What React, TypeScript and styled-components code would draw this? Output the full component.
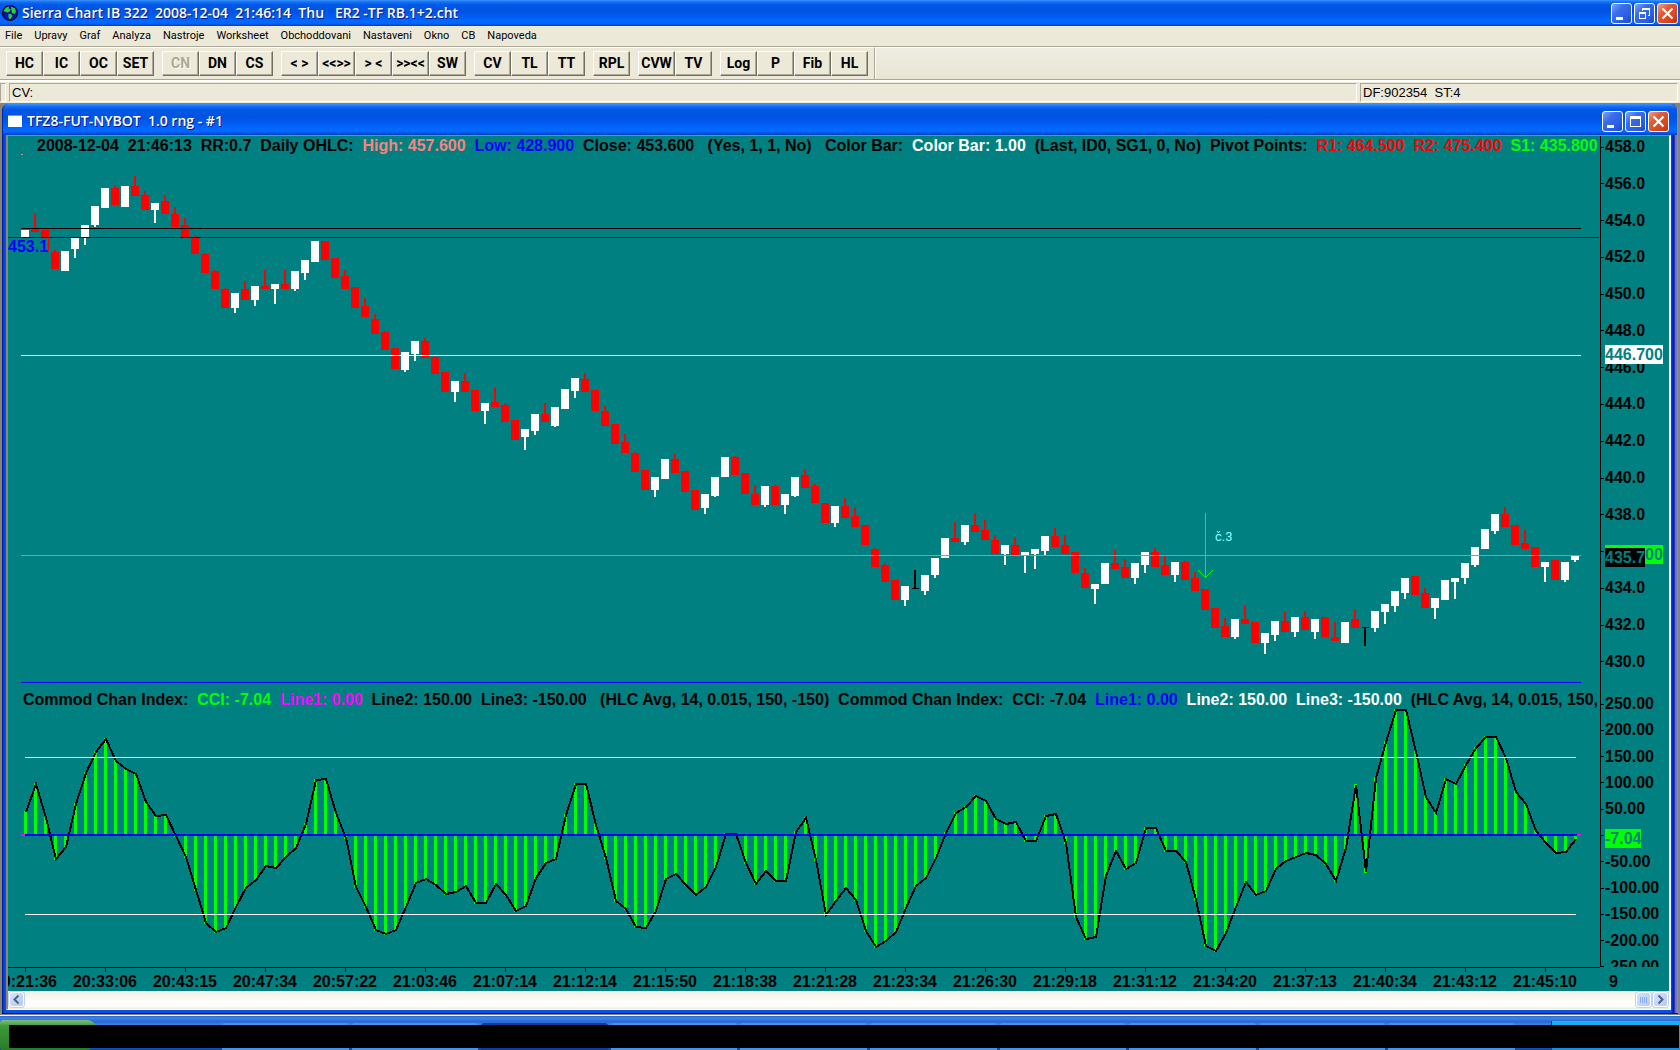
import React from "react";
import styled, { createGlobalStyle, css } from "styled-components";

const teal = "#008080";
const face = "#ece9d8";
const ui = `Roboto, "Open Sans", sans-serif`;
const chartFont = `"Liberation Sans", Arial, sans-serif`;

const Global = createGlobalStyle`
  * { box-sizing: border-box; }
  body { margin: 0; background: #808080; }
`;

const Desktop = styled.div`
  display: flex;
  flex-direction: column;
  min-height: 100vh;
  background: #868478;
  font: 11px ${ui};
  color: #000;
`;

/* ---------- title bars ---------- */

const titleGradient = css`
  background: linear-gradient(
    to bottom,
    #3a93ff 0%,
    #1270f4 8%,
    #0058e6 18%,
    #0053e1 42%,
    #005cf2 62%,
    #0268ff 80%,
    #0066fc 90%,
    #003fc0 100%
  );
`;

const TitleBar = styled.header<{ $child?: boolean }>`
  ${titleGradient}
  display: flex;
  align-items: center;
  gap: 4px;
  flex: none;
  height: ${(p) => (p.$child ? 31 : 26)}px;
  padding: ${(p) => (p.$child ? "3px 8px 0 4px" : "0 2px")};
  border-radius: ${(p) => (p.$child ? "6px 6px 0 0" : "0")};
`;

const TitleText = styled.h1`
  flex: 1;
  margin: 0;
  overflow: hidden;
  white-space: pre;
  font: 600 14px/18px "Open Sans", "Noto Sans", sans-serif;
  color: #fff;
  text-shadow: 1px 1px 0 #0a1883;
`;

const WinButtons = styled.div`
  display: flex;
  gap: 2px;
`;

const WinButton = styled.button<{ $close?: boolean }>`
  display: grid;
  place-items: center;
  width: 21px;
  height: 21px;
  padding: 0;
  border: 1px solid #fff;
  border-radius: 3px;
  background: ${(p) =>
    p.$close
      ? "linear-gradient(135deg, #f0a088 0%, #e25a35 35%, #d8441c 75%, #b8300c 100%)"
      : "linear-gradient(135deg, #7fa6f8 0%, #3a6cea 35%, #2a5ce4 75%, #1c46c0 100%)"};
`;

/* ---------- menu, toolbar, status ---------- */

const MenuBar = styled.nav`
  display: flex;
  align-items: center;
  gap: 12px;
  flex: none;
  height: 20px;
  padding: 0 5px;
  background: ${face};
`;

const MenuItem = styled.button`
  padding: 0;
  border: 0;
  background: none;
  font: 11px/16px ${ui};
  color: #000;
`;

const ToolBar = styled.div`
  display: flex;
  flex: none;
  height: 36px;
  border-top: 1px solid #aca899;
  border-bottom: 2px solid #fff;
  background: linear-gradient(#efede4, #e8e5d2);
  box-shadow: inset 0 1px 0 #fff, inset 0 -1px 0 #aca899;
`;

const ToolBand = styled.div`
  display: flex;
  align-items: center;
  gap: 8px;
  margin-bottom: 1px;
  padding: 0 6px 0 6px;
  background: ${face};
  border-top: 1px solid #fff;
  border-right: 1px solid #aca899;
  box-shadow: 1px 0 0 #fff;
`;

const ToolGroup = styled.div`
  display: flex;
`;

const ToolButton = styled.button`
  width: 37px;
  height: 25px;
  padding: 0 0 2px;
  border: 1px solid;
  border-color: #fff #716f64 #716f64 #fff;
  box-shadow: inset -1px -1px 0 #aca899;
  background: ${face};
  font: 700 14px/20px ${ui};
  white-space: nowrap;
  color: #000;
  &:disabled {
    color: #aca899;
    text-shadow: 1px 1px 0 #fff;
  }
`;

const StatusBar = styled.div`
  display: flex;
  gap: 3px;
  flex: none;
  height: 21px;
  padding: 1px 2px 1px 0;
  background: ${face};
`;

const StatusCell = styled.div<{ $width?: string }>`
  flex: ${(p) => (p.$width ? `0 0 ${p.$width}` : "1")};
  padding: 0 2px;
  border: 1px solid;
  border-color: #aca899 #fff #fff #aca899;
  font: 13px/17px ${chartFont};
  white-space: pre;
`;

/* ---------- chart window ---------- */

const ChildWindow = styled.section`
  display: flex;
  flex-direction: column;
  flex: 1;
  margin: 1px 2px 0 2px;
  padding: 0 4px 3px;
  background: linear-gradient(to right, #001ea0, #0a4fe8 3px, #0a4fe8 calc(100% - 7px), #0010a0 calc(100% - 4px), #5a62c8 calc(100% - 3px), #8a8fe0);
  border-radius: 6px 6px 0 0;
  border-bottom: 1px solid #000e90;
`;

const FullTitle = styled.div`
  margin: 0 -3px;
`;

const Client = styled.div`
  display: flex;
  flex-direction: column;
  flex: 1;
  margin-right: 3px;
  border: solid;
  border-width: 1px 2px 1px 2px;
  border-color: #8a8878 #fff #fff #8a8878;
`;

const ChartGrid = styled.main`
  display: grid;
  flex: 1;
  grid-template-columns: minmax(0, 1fr) 69px;
  grid-template-rows: minmax(548px, 548fr) minmax(283px, 283fr) 24px;
  background: ${teal};
  font: 700 16px/18px ${chartFont};
`;

const Panel = styled.div`
  position: relative;
  overflow: hidden;
`;

const Plot = styled.svg`
  position: absolute;
  inset: 0;
  width: 100%;
  height: 100%;
`;

const Legend = styled.p<{ $lead: number; $top: number }>`
  position: relative;
  margin: 0;
  padding: ${(p) => p.$top}px 0 0 ${(p) => p.$lead}px;
  white-space: pre;
`;

const Tone = styled.span<{ $color: string }>`
  color: ${(p) => p.$color};
`;

const LeftTag = styled.span`
  position: absolute;
  left: 0;
  top: 102px;
  width: 40px;
  background: ${teal};
  color: #00f;
`;

const Note = styled.span`
  position: absolute;
  left: 1207px;
  top: 393px;
  font: 13px/16px ${ui};
  color: #80ffff;
`;

const Axis = styled.div`
  position: relative;
  overflow: hidden;
  border-left: 1px solid #000;
`;

const AxisScale = styled.ol<{ $pad: string }>`
  display: flex;
  flex-direction: column;
  justify-content: space-between;
  position: absolute;
  inset: ${(p) => p.$pad};
  margin: 0;
  padding: 0;
  list-style: none;
`;

const AxisLabel = styled.li`
  display: flex;
  align-items: center;
  gap: 1px;
  height: 18px;
  &::before {
    content: "";
    width: 3px;
    height: 1px;
    background: #000;
  }
`;

const ValueTag = styled.span<{ $top: number; $bg: string }>`
  position: absolute;
  left: 4px;
  top: ${(p) => p.$top}px;
  line-height: 19px;
  background: ${(p) => p.$bg};
  color: ${teal};
`;

const TimeAxis = styled.div`
  display: flex;
  overflow: hidden;
  border-top: 1px solid #000;
`;

const TimeList = styled.ol`
  display: flex;
  margin: 0 0 0 -23px;
  padding: 0;
  list-style: none;
`;

const TimeLabel = styled.li`
  display: flex;
  flex-direction: column;
  align-items: center;
  gap: 1px;
  flex: none;
  width: 80px;
  &::before {
    content: "";
    width: 1px;
    height: 4px;
    background: #000;
  }
`;

const TimeCorner = styled.div`
  padding: 6px 0 0 9px;
`;

const ScrollBar = styled.div`
  display: flex;
  justify-content: space-between;
  flex: none;
  height: 18px;
  padding: 1px;
  background: linear-gradient(#f1efe8, #fdfdfa 60%, #fefefb 85%, #ebebd8);
`;

const ScrollEnd = styled.div`
  display: flex;
  gap: 2px;
`;

const ScrollButton = styled.button`
  display: grid;
  place-items: center;
  width: 15px;
  height: 15px;
  padding: 0;
  border: 1px solid #fff;
  border-radius: 3px;
  background: linear-gradient(135deg, #d6e2fe, #b4c8f6);
  box-shadow: 0 0 0 1px #c3d0ea;
`;

/* ---------- task bar ---------- */

const TaskBar = styled.footer`
  display: grid;
  grid-template: 34px / 97px minmax(0, 1fr) 129px;
  flex: none;
  margin-top: 1px;
  border-top: 1px solid #f4f2e6;
  background: linear-gradient(#2a62c8, #3f86ea 2px, #2f74de 4px, #2a66d8 6px, #3a80ea 8px, #245bd4 20px, #1f50c6 32px, #153a9a);
`;

const Start = styled.button`
  grid-area: 1 / 1;
  margin: 4px 0 0;
  padding: 0;
  border: 0;
  border-radius: 3px 10px 12px 3px;
  background: linear-gradient(#7fbf7c, #3f9a3c 6px, #2f8a30 20px, #2a7a2a);
`;

const Tabs = styled.div`
  grid-area: 1 / 2;
  display: flex;
  gap: 3px;
  padding: 7px 36px 0 125px;
`;

const Tab = styled.span<{ $on?: boolean }>`
  flex: 1;
  border-radius: 3px 3px 0 0;
  background: ${(p) => (p.$on ? "#123c9c" : "#4a90f0")};
`;

const Tray = styled.div`
  grid-area: 1 / 3;
  margin-top: 5px;
  border-left: 1px solid #0a3ca0;
  background: linear-gradient(#1ab0f0, #1290e4);
`;

const Mask = styled.div`
  grid-area: 1 / 1 / 2 / 4;
  margin: 9px 1px 2px 9px;
  background: #000;
`;

/* ---------- data ---------- */

type Candle = [kind: "W" | "R" | "K", high: number, top: number, base: number, low: number];

// Each entry: colour, then wick top, body top, body base, wick base in window rows.
const candleText = `W 230 230 237 237|R 213 229 232 232|R 230 230 251 251|R 250 252 269 269|W 251 251 271 271|W 238 238 249 258|W 225 225 237 245|W 206 206 225 227|W 188 188 208 208|R 185 188 205 205
W 186 186 207 207|R 176 186 196 196|R 191 195 210 210|W 203 203 210 223|R 195 201 214 214|R 207 214 227 227|R 218 225 237 237|R 235 238 254 254|R 253 254 273 273|R 270 271 289 289
R 288 289 308 308|W 293 293 308 313|R 281 289 300 300|W 286 286 300 306|R 270 286 289 289|W 284 284 289 304|R 270 284 289 289|W 271 271 289 291|W 260 260 273 280|W 241 241 262 262
R 241 241 260 260|R 258 258 278 278|R 270 276 289 289|R 287 287 308 308|R 298 306 317 317|R 314 319 334 334|R 331 332 350 350|R 348 348 369 369|W 352 352 370 372|W 341 341 354 361
R 338 341 358 358|R 356 357 374 374|R 372 372 392 392|W 381 381 392 402|R 373 381 392 392|R 390 390 411 411|W 403 403 411 424|R 388 402 407 407|R 403 405 422 422|R 420 420 440 440
W 429 429 437 450|W 414 414 431 435|R 403 414 422 422|W 407 407 426 427|W 389 389 409 409|W 378 378 391 398|R 373 379 392 392|R 390 390 411 411|R 406 411 426 426|R 424 424 444 444
R 434 442 453 453|R 452 453 472 472|R 470 470 490 490|W 477 477 490 497|W 459 459 479 479|R 454 459 473 473|R 471 471 492 492|R 490 490 510 510|W 494 494 508 514|W 477 477 496 497
W 457 457 477 477|R 456 457 475 475|R 473 473 494 494|R 485 494 505 505|W 486 486 505 507|R 485 486 505 505|W 494 494 505 514|W 477 477 496 497|R 469 475 488 488|R 484 486 503 503
R 503 503 523 523|W 506 506 523 527|R 498 506 518 518|R 507 516 527 527|R 525 525 545 545|R 548 549 567 567|R 563 565 582 582|R 580 580 600 600|W 586 586 600 606|K 570 588 589 589
W 575 575 591 595|W 558 558 575 578|W 538 538 558 558|R 522 538 542 542|W 525 525 542 545|R 513 525 532 532|R 520 530 540 540|R 535 540 554 554|W 545 545 554 565|R 537 545 556 556
W 552 552 555 573|W 549 549 554 569|W 536 536 551 555|R 528 536 547 547|R 535 545 554 554|R 552 552 573 573|R 568 573 588 588|W 584 584 589 604|W 563 563 584 584|R 550 563 569 569
R 559 567 578 578|W 563 563 578 584|W 552 552 565 573|R 548 552 567 567|R 556 565 575 575|W 562 562 575 582|R 561 562 580 580|R 572 578 591 591|R 589 589 610 610|R 608 608 628 628
R 618 626 637 637|W 619 619 637 639|R 605 619 624 624|R 622 622 643 643|W 633 633 643 654|W 621 621 635 641|R 612 621 632 632|W 617 617 632 637|R 611 617 630 630|W 619 619 632 639
R 617 617 637 637|R 622 637 641 641|W 622 622 643 643|R 609 619 628 628|K 627 627 628 646|W 611 611 628 632|W 604 604 612 624|W 591 591 606 612|W 578 578 593 599|R 576 576 595 595
R 588 593 608 608|W 598 598 608 619|W 580 580 600 600|W 578 578 582 599|W 563 563 578 584|W 547 547 565 567|W 529 529 549 549|W 514 514 531 534|R 507 514 527 527|R 525 525 545 545
R 530 543 549 549|R 547 547 567 567|W 562 562 567 582|R 560 560 580 580|W 562 562 580 582|W 556 556 560 562`;

const candles: Candle[] = candleText.split(/[|\n]/).map((entry) => {
  const [kind, ...rows] = entry.trim().split(" ");
  return [kind, ...rows.map((r) => Number(r) - 136)] as Candle;
});

// Index readings, three units to a row.
const cci = [
  425, 343, 445, 568, 530, 402, 308, 246, 206, 272, 297, 312, 395, 437, 434, 498, 560, 660, 760, 787,
  773, 712, 654, 630, 588, 594, 560, 534, 462, 330, 326, 430, 504, 652, 710, 780, 793, 781, 710, 640,
  626, 645, 672, 665, 648, 698, 698, 642, 676, 722, 707, 624, 580, 566, 435, 342, 342, 465, 565, 693,
  717, 770, 774, 722, 628, 611, 645, 675, 652, 590, 491, 491, 580, 641, 602, 632, 632, 487, 443, 570,
  735, 694, 654, 690, 783, 831, 812, 786, 714, 648, 623, 563, 488, 428, 410, 377, 394, 447, 462, 455,
  512, 512, 438, 431, 520, 740, 806, 800, 618, 542, 598, 580, 474, 474, 542, 542, 576, 690, 828, 843,
  788, 710, 636, 675, 662, 597, 573, 562, 548, 555, 583, 632, 535, 345, 607, 325, 215, 120, 120, 245,
  380, 429, 328, 343, 285, 233, 201, 201, 265, 365, 402, 483, 520, 549, 546, 508,
].map((v) => Math.round(v / 3) - 14);

const times =
  "20:21:36 20:33:06 20:43:15 20:47:34 20:57:22 21:03:46 21:07:14 21:12:14 21:15:50 21:18:38 21:21:28 21:23:34 21:26:30 21:29:18 21:31:12 21:34:20 21:37:13 21:40:34 21:43:12 21:45:10".split(" ");
const prices = ["458.0", "456.0", "454.0", "452.0", "450.0", "448.0", "446.0", "444.0", "442.0", "440.0", "438.0", "", "434.0", "432.0", "430.0"];
const levels = ["250.00", "200.00", "150.00", "100.00", "50.00", "", "-50.00", "-100.00", "-150.00", "-200.00", "-250.00"];
const menus = ["File", "Upravy", "Graf", "Analyza", "Nastroje", "Worksheet", "Obchoddovani", "Nastaveni", "Okno", "CB", "Napoveda"];
const tools = [
  ["HC", "IC", "OC", "SET"],
  ["CN", "DN", "CS"],
  ["<  >", "<<>>", ">  <", ">><<", "SW"],
  ["CV", "TL", "TT"],
  ["RPL"],
  ["CVW", "TV"],
  ["Log", "P", "Fib", "HL"],
];

const fill = { W: "#fff", R: "#f00", K: "#000" };

/* ---------- parts ---------- */

const WindowControls = ({ restore }: { restore?: boolean }) => (
  <WinButtons>
    <WinButton aria-label="Minimize">
      <svg width="17" height="17">
        <path d="M3 12h7v3H3z" fill="#fff" />
      </svg>
    </WinButton>
    <WinButton aria-label={restore ? "Restore" : "Maximize"}>
      <svg width="17" height="17" fill="none" stroke="#fff" shapeRendering="crispEdges">
        {restore ? (
          <>
            <path d="M6.5 6V4.5h7v6H12" />
            <path d="M6 4h8" strokeWidth="2" />
            <path d="M3.5 7.5h6v6h-6z" />
            <path d="M3 8h7" strokeWidth="2" />
          </>
        ) : (
          <>
            <path d="M3.500 3.500h10v10h-10z" />
            <path d="M3 4.500h11" strokeWidth="3" />
          </>
        )}
      </svg>
    </WinButton>
    <WinButton $close aria-label="Close">
      <svg width="17" height="17" stroke="#fff" strokeWidth="2.200">
        <path d="M3.500 3.500l10 10M13.500 3.500l-10 10" />
      </svg>
    </WinButton>
  </WinButtons>
);

const Globe = () => (
  <svg width="16" height="16" viewBox="0 0 16 16">
    <circle cx="8" cy="8" r="7.500" fill="#0a12a8" stroke="#000" />
    <path d="M1.500 6L4 2.500 7 1.500 6.500 3.500 8.500 4 8 6 6 7.500 4 7z" fill="#27d427" />
    <path d="M9 1.500l4 2 1 3-1.500 2.500L10 8 9.500 5.500z" fill="#27d427" />
    <path d="M6.500 8.500l3 1 1 1.500-2.500 3.500-1.500-2z" fill="#27d427" />
  </svg>
);

const PricePlot = () => (
  <Plot viewBox="0 0 1592 548" preserveAspectRatio="none" shapeRendering="crispEdges">
    {candles.map(([kind, high, top, base, low], i) => {
      const x = 13 + 10 * i;
      return (
        <g key={i} fill={fill[kind]}>
          <rect x={x + 3} y={high} width="2" height={low - high} />
          <rect x={kind === "K" ? x + 1 : x} y={top} width={kind === "K" ? 7 : 8} height={base - top} />
        </g>
      );
    })}
    <rect x="13" y="18" width="2" height="1" fill="#ff8080" />
    <rect x="13" y="92" width="1560" height="1" fill="#000" />
    <rect x="0" y="101" width="1591" height="1" fill="#0000c8" />
    <rect x="13" y="219" width="1560" height="1" fill="#fff" />
    <rect x="13" y="419" width="1560" height="1" fill="#0f0" />
    <rect x="13" y="546" width="1560" height="1" fill="#00f" />
    <path d="M1197.500 377v64M1190.500 434.500l7 7 7-7" fill="none" stroke="#0f0" />
  </Plot>
);

const CciPlot = () => (
  <Plot viewBox="0 0 1592 283" preserveAspectRatio="none" shapeRendering="crispEdges">
    {cci.map((y, i) => (
      <rect key={i} x={16 + 10 * i} y={Math.min(y - 1, 151)} width="3" height={Math.abs(151 - y) + 1} fill="#0f0" />
    ))}
    <polyline points={cci.map((y, i) => `${18 + 10 * i},${y}`).join(" ")} fill="none" stroke="#000" strokeWidth="2" />
    <rect x="17" y="73" width="1551" height="1" fill="#fff" />
    <rect x="17" y="230" width="1551" height="1" fill="#fff" />
    <rect x="13" y="150" width="1560" height="2" fill="#f0f" />
    <rect x="17" y="150" width="1552" height="2" fill="#00f" />
  </Plot>
);

export default function App() {
  return (
    <Desktop>
      <Global />
      <TitleBar>
        <Globe />
        <TitleText>{"Sierra Chart IB 322  2008-12-04  21:46:14  Thu   ER2 -TF RB.1+2.cht"}</TitleText>
        <WindowControls restore />
      </TitleBar>
      <MenuBar>
        {menus.map((m) => (
          <MenuItem key={m}>{m}</MenuItem>
        ))}
      </MenuBar>
      <ToolBar>
        <ToolBand>
          {tools.map((group) => (
            <ToolGroup key={group[0]}>
              {group.map((t) => (
                <ToolButton key={t} disabled={t === "CN"}>
                  {t}
                </ToolButton>
              ))}
            </ToolGroup>
          ))}
        </ToolBand>
      </ToolBar>
      <StatusBar>
        <StatusCell $width="5px" />
        <StatusCell>CV:</StatusCell>
        <StatusCell $width="318px">{"DF:902354  ST:4"}</StatusCell>
      </StatusBar>

      <ChildWindow>
        <FullTitle>
          <TitleBar as="div" $child>
            <svg width="16" height="14">
              <path d="M1 1h14v12H1z" fill="#fff" />
              <path d="M1 1h14v1H1z" fill="#5ca0f0" />
            </svg>
            <TitleText as="h2">{"TFZ8-FUT-NYBOT  1.0 rng - #1"}</TitleText>
            <WindowControls />
          </TitleBar>
        </FullTitle>
        <Client>
          <ChartGrid>
            <Panel>
              <PricePlot />
              <Legend $lead={29} $top={1}>
                {"2008-12-04  21:46:13  RR:0.7  Daily OHLC:  "}
                <Tone $color="#ff8080">High: 457.600</Tone>
                {"  "}
                <Tone $color="#00f">Low: 428.900</Tone>
                {"  Close: 453.600   (Yes, 1, 1, No)   Color Bar:  "}
                <Tone $color="#fff">Color Bar: 1.00</Tone>
                {"  (Last, ID0, SG1, 0, No)  Pivot Points:  "}
                <Tone $color="#f00">{"R1: 464.500  R2: 475.400"}</Tone>
                {"  "}
                <Tone $color="#0f0">S1: 435.800</Tone>
              </Legend>
              <LeftTag>453.1</LeftTag>
              <Note>č.3</Note>
            </Panel>
            <Axis>
              <AxisScale $pad="2px 0 13px 0">
                {prices.map((p, i) => (
                  <AxisLabel key={i}>{p}</AxisLabel>
                ))}
              </AxisScale>
              <ValueTag $top={209} $bg="#fff">446.700</ValueTag>
              <ValueTag $top={409} $bg="#0f0">435.800</ValueTag>
              <ValueTag $top={412} $bg="#000">435.7</ValueTag>
            </Axis>
            <Panel>
              <CciPlot />
              <Legend $lead={15} $top={7}>
                {"Commod Chan Index:  "}
                <Tone $color="#0f0">CCI: -7.04</Tone>
                {"  "}
                <Tone $color="#f0f">Line1: 0.00</Tone>
                {"  Line2: 150.00  Line3: -150.00   (HLC Avg, 14, 0.015, 150, -150)  Commod Chan Index:  CCI: -7.04  "}
                <Tone $color="#00f">Line1: 0.00</Tone>
                {"  "}
                <Tone $color="#fff">{"Line2: 150.00  Line3: -150.00"}</Tone>
                {"  (HLC Avg, 14, 0.015, 150,"}
              </Legend>
            </Panel>
            <Axis>
              <AxisScale $pad="11px 0 -9px 0">
                {levels.map((l, i) => (
                  <AxisLabel key={i}>{l}</AxisLabel>
                ))}
              </AxisScale>
              <ValueTag $top={145} $bg="#0f0">-7.04</ValueTag>
            </Axis>
            <TimeAxis>
              <TimeList>
                {times.map((t) => (
                  <TimeLabel key={t}>{t}</TimeLabel>
                ))}
              </TimeList>
            </TimeAxis>
            <TimeCorner>9</TimeCorner>
          </ChartGrid>
          <ScrollBar>
            <ScrollButton aria-label="Scroll left">
              <svg width="9" height="9" fill="none" stroke="#4d6185" strokeWidth="2">
                <path d="M6.500 0.500l-4 4 4 4" />
              </svg>
            </ScrollButton>
            <ScrollEnd>
              <ScrollButton aria-label="Scroll position">
                <svg width="9" height="8" stroke="#8cb0f8" shapeRendering="crispEdges">
                  <path d="M1.500 1v6M3.500 1v6M5.500 1v6M7.500 1v6" />
                </svg>
              </ScrollButton>
              <ScrollButton aria-label="Scroll right">
                <svg width="9" height="9" fill="none" stroke="#4d6185" strokeWidth="2">
                  <path d="M2.500 0.500l4 4-4 4" />
                </svg>
              </ScrollButton>
            </ScrollEnd>
          </ScrollBar>
        </Client>
      </ChildWindow>

      <TaskBar>
        <Start aria-label="Start" />
        <Tabs>
          {Array.from({ length: 10 }, (_, i) => (
            <Tab key={i} $on={i === 2} />
          ))}
        </Tabs>
        <Tray />
        <Mask />
      </TaskBar>
    </Desktop>
  );
}
